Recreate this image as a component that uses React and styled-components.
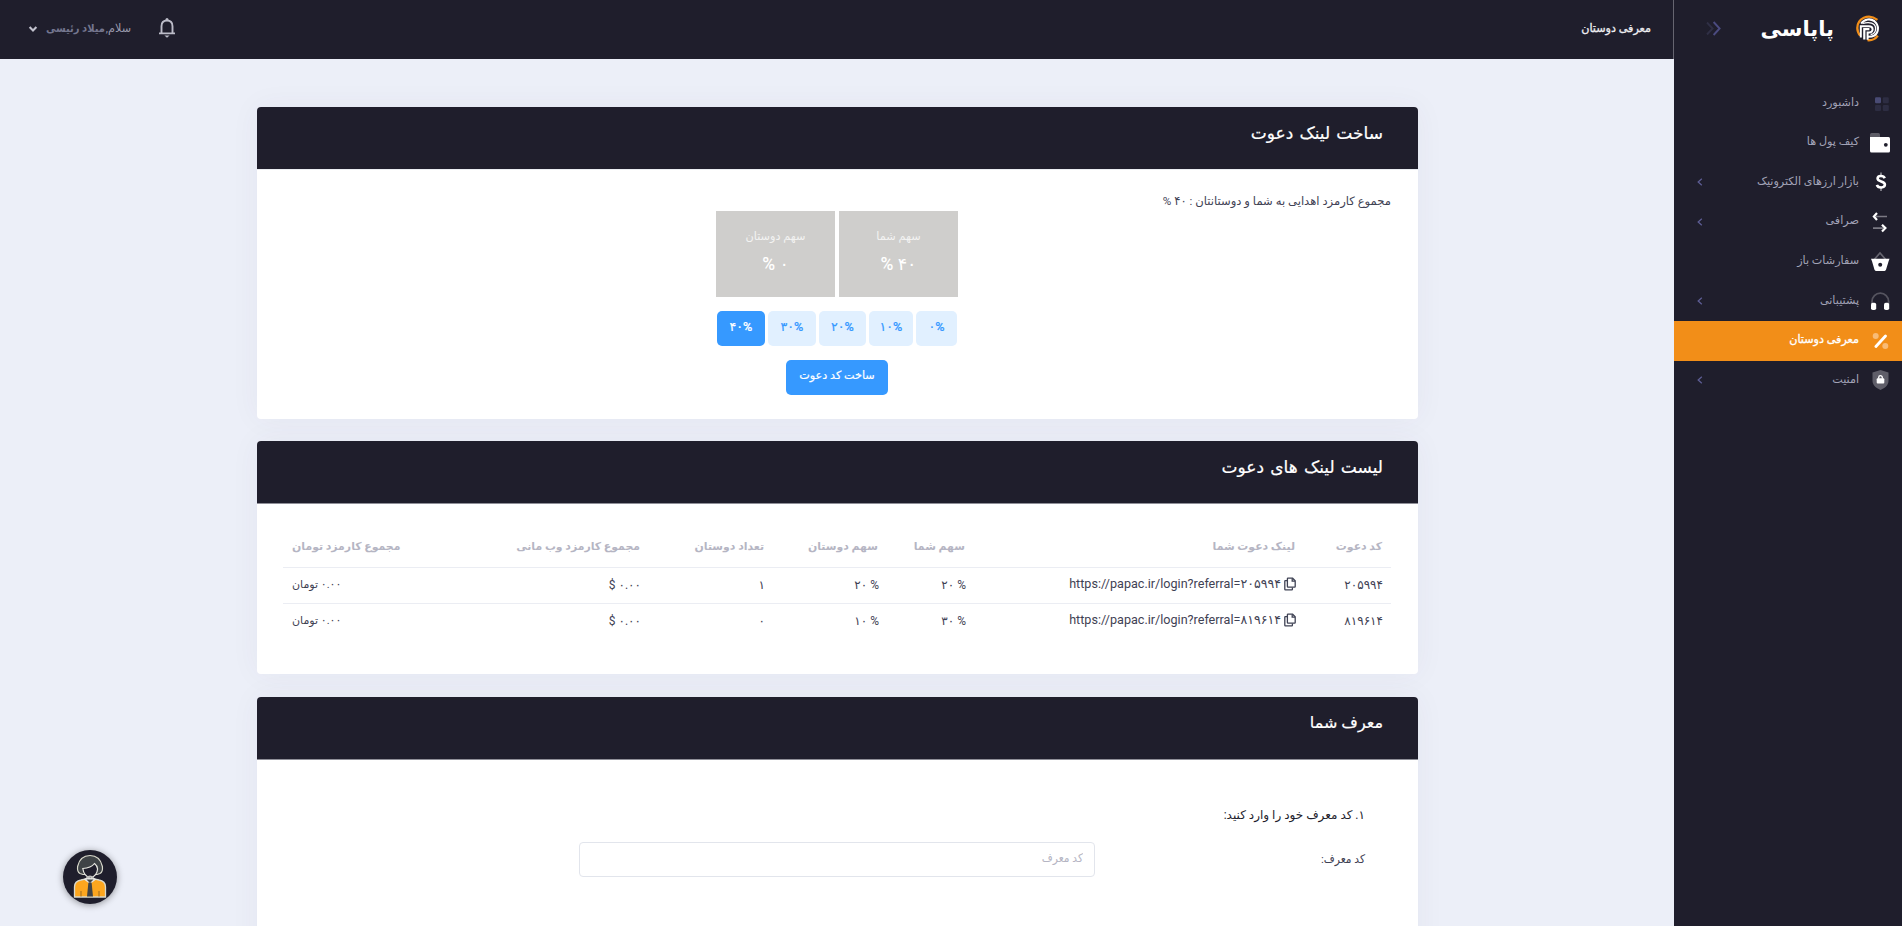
import React from "react";
import styled, { createGlobalStyle, css } from "styled-components";

const ink = "#1f1e2c";
const accent = "#f28e18";
const blue = "#3699ff";
const narrow = `Roboto, "DejaVu Sans Condensed", "DejaVu Sans", sans-serif`;

const Global = createGlobalStyle`
  *, *::before, *::after { box-sizing: border-box; }
  body {
    margin: 0;
    overflow: hidden;
    background: #eceff8;
    font-family: Roboto, "DejaVu Sans", sans-serif;
    font-size: 12px;
    color: #3f4254;
  }
`;

const Page = styled.div`
  direction: rtl;
  display: grid;
  grid-template-columns: 228px minmax(0, 1fr);
  height: 926px;
  overflow: hidden;
`;

/* ---------- sidebar ---------- */
const Sidebar = styled.aside`
  background: ${ink};
  display: flex;
  flex-direction: column;
`;

const Brand = styled.div`
  height: 59px;
  display: flex;
  align-items: center;
  padding: 0 22px 2px 32px;
`;

const BrandName = styled.span`
  margin-right: 22px;
  font-size: 21px;
  font-weight: 700;
  line-height: 30px;
  color: #fff;
  white-space: nowrap;
`;

const BrandToggle = styled.span`
  display: flex;
  margin-right: auto;
`;

const Menu = styled.ul`
  list-style: none;
  margin: 24.4px 0 0;
  padding: 0;
`;

const MenuItem = styled.li`
  height: 39.6px;
  display: flex;
  align-items: center;
  padding: 0 9px 0 22px;
  background: ${(p) => (p.$active ? accent : "transparent")};
  color: ${(p) => (p.$active ? "#fff" : "#a2a3b7")};
  -webkit-text-stroke: ${(p) => (p.$active ? "0.3px #fff" : "0")};
`;

const MenuIcon = styled.span`
  width: 24px;
  display: flex;
  justify-content: center;
`;

const MenuLabel = styled.span`
  margin-right: 10px;
  font-size: 11.2px;
  line-height: 20px;
  padding-bottom: 1px;
  white-space: nowrap;
`;

const MenuArrow = styled.span`
  margin-right: auto;
  display: flex;
`;

/* ---------- top bar ---------- */
const Main = styled.div`
  display: flex;
  flex-direction: column;
  min-width: 0;
`;

const Topbar = styled.header`
  height: 59px;
  flex: none;
  background: ${ink};
  border-right: 1px solid #666570;
  display: flex;
  align-items: center;
  padding: 0 22px 2px 28px;
`;

const TopTitle = styled.h1`
  margin: 0;
  font-size: 11.2px;
  font-weight: 500;
  line-height: 20px;
  color: #eeeef2;
  -webkit-text-stroke: 0.3px #eeeef2;
`;

const Bell = styled.span`
  margin-right: auto;
  display: flex;
`;

const User = styled.div`
  margin-right: 27px;
  display: flex;
  align-items: center;
  gap: 1px;
  font-size: 11.2px;
  line-height: 20px;
  color: #9899ac;
`;

const UserName = styled.span`
  font-family: ${narrow};
  font-stretch: condensed;
  font-size: 11px;
  color: #74768f;
  font-weight: 700;
`;

const Caret = styled.span`
  display: flex;
  margin-right: 7px;
`;

/* ---------- cards ---------- */
const Content = styled.main`
  padding: 48px 256px 0 257px;
  display: flex;
  flex-direction: column;
  gap: 22.4px;
`;

const Card = styled.section`
  flex: none;
  height: ${(p) => p.$height}px;
  background: #fff;
  border-radius: 4px;
  box-shadow: 0 0 30px rgba(82, 63, 105, 0.05);
`;

const CardHead = styled.div`
  height: 63px;
  background: ${ink};
  border-bottom: 1px solid ${(p) => p.$line || "#8f8f98"};
  border-radius: 4px 4px 0 0;
  padding: 11px 35px 0;
`;

const CardTitle = styled.h3`
  margin: 0;
  font-size: ${(p) => p.$size || 17}px;
  word-spacing: ${(p) => p.$space || 0}px;
  font-weight: 500;
  line-height: 30px;
  color: #fff;
  -webkit-text-stroke: 0.2px #fff;
`;

const LinkBody = styled.div`
  display: flex;
  flex-direction: column;
  align-items: center;
  padding: 21px 27px 0 26px;
`;

const Total = styled.p`
  align-self: stretch;
  margin: 0;
  line-height: 20px;
  font-size: 11.6px;
`;

const Shares = styled.div`
  display: flex;
  gap: 4px;
`;

const Share = styled.div`
  width: 119px;
  height: 86px;
  background: #cfcecc;
  color: #fff;
  text-align: center;
  padding-top: 16px;
`;

const ShareLabel = styled.div`
  font-size: 11.3px;
  line-height: 20px;
  color: #f3f3f2;
`;

const ShareValue = styled.div`
  font-size: 17.5px;
  font-weight: 500;
  line-height: 24px;
  margin-top: 5px;
`;

const Options = styled.div`
  display: flex;
  gap: 3px;
  margin-top: 14px;
`;

const solid = css`
  background: ${blue};
  color: #fff;
`;
const light = css`
  background: #e1f0ff;
  color: ${blue};
`;

const Button = styled.button`
  border: 0;
  border-radius: 5px;
  height: 35px;
  width: ${(p) => p.$width}px;
  padding: 0 0 3px;
  font: inherit;
  font-size: 12.6px;
  font-weight: 500;
  line-height: 20px;
  white-space: nowrap;
  -webkit-text-stroke: 0.2px currentColor;
  ${(p) => (p.$solid ? solid : light)}
`;

const Submit = styled(Button)`
  margin-top: 14px;
  font-size: 11.2px;
`;

/* ---------- table ---------- */
const TableWrap = styled.div`
  padding: 25px 27px 0 26px;
`;

const Table = styled.table`
  width: 100%;
  table-layout: fixed;
  border-collapse: collapse;
`;

const Col = styled.col`
  width: ${(p) => p.$width}px;
`;

const Th = styled.th`
  height: 38px;
  padding: 0 9px 2px;
  text-align: ${(p) => p.$align || "right"};
  font-size: 10.9px;
  font-weight: 700;
  line-height: 20px;
  color: #b5b5c3;
  white-space: nowrap;
`;

const Td = styled.td`
  height: 36px;
  padding: 0 8px 1px 9px;
  border-top: 1px solid #ebedf3;
  text-align: ${(p) => p.$align || "right"};
  font-size: ${(p) => p.$size || 12}px;
  line-height: 20px;
  white-space: nowrap;
`;

const Ltr = styled.span`
  direction: ltr;
  unicode-bidi: isolate;
`;

const Referral = styled.span`
  display: inline-flex;
  align-items: center;
  gap: 3px;
`;

const Url = styled(Ltr)`
  font-size: 12.6px;
  padding-top: 1px;
`;

/* ---------- form ---------- */
const Form = styled.form`
  padding: 45px 53px 0;
`;

const Step = styled.div`
  font-size: 12px;
  line-height: 20px;
  color: #1e1e2d;
`;

const Field = styled.label`
  display: grid;
  grid-template-columns: 270px 516px;
  align-items: center;
  margin-top: 17px;
  font-family: ${narrow};
  font-size: 11.8px;
  line-height: 20px;
`;

const Input = styled.input`
  height: 35px;
  border: 1px solid #e2e5ec;
  border-radius: 4px;
  padding: 0 11px 2px;
  font: inherit;
  outline: 0;
  &::placeholder { color: #b5b5c3; opacity: 1; }
`;

const Support = styled.button`
  position: fixed;
  left: 63px;
  top: 850px;
  width: 54px;
  height: 54px;
  padding: 0;
  border: 0;
  border-radius: 50%;
  background: ${ink};
  box-shadow: 0 1px 7px rgba(0, 0, 0, 0.4);
  display: flex;
  align-items: center;
  justify-content: center;
`;

/* ---------- drawings ---------- */
const Logo = () => (
  <svg width="24" height="27" viewBox="0 0 24 27" fill="none">
    <path d="M4.2 20.6A11.4 11.4 0 0 1 1.3 13C1.3 4 12 -2.5 21.4 4.8" stroke={accent} strokeWidth="2.3" />
    <path d="M11.5 25.2C16 25.6 19.4 24 21.8 20.6" stroke={accent} strokeWidth="2.3" />
    <path d="M5.2 8.6C8.6 3.8 14.4 3.2 18.4 6.2C23.4 10.2 22.8 17.8 18.2 20.6C16.6 21.6 14.6 21.8 12 21.8" stroke="#fff" strokeWidth="2.1" />
    <path d="M4.8 22.6V11.2H13C17.8 11.2 17.8 17.4 13.2 17.4H11.6V24.8" stroke="#fff" strokeWidth="2" />
    <path d="M8.3 24.6V14.2H13.4" stroke="#fff" strokeWidth="2.2" />
    <path d="M7 8.3C13 6.6 19.6 7.6 19.6 13.4C19.6 17 17.4 19.2 14.6 19.5" stroke="#fff" strokeWidth="1.3" />
  </svg>
);

const ToggleIcon = () => (
  <svg width="15" height="15" viewBox="0 0 15 15" fill="none" strokeWidth="1.9">
    <path d="M1 1.5L6.6 7.5L1 13.5" stroke="#2f2f45" />
    <path d="M7.6 1L13.6 7.5L7.6 14" stroke="#4b4b80" />
  </svg>
);

const ArrowIcon = () => (
  <svg width="8" height="8" viewBox="0 0 8 8" fill="none">
    <path d="M5.8 0.8L2.2 4L5.8 7.2" stroke="#5d5d94" strokeWidth="1.3" />
  </svg>
);

const DashboardIcon = () => (
  <svg width="24" height="20" viewBox="0 0 24 20">
    <rect x="6" y="4.2" width="6" height="6" rx="1.2" fill="#494b74" />
    <rect x="13.8" y="4.2" width="6" height="6" rx="1.2" fill="#2d2d42" />
    <rect x="6" y="12" width="6" height="6" rx="1.2" fill="#2d2d42" />
    <rect x="13.8" y="12" width="6" height="6" rx="1.2" fill="#2d2d42" />
  </svg>
);

const WalletIcon = () => (
  <svg width="24" height="22" viewBox="-1 0 24 22">
    <rect x="0" y="1" width="10" height="8" rx="1.5" fill="#5d5c66" />
    <path d="M0 5H18.5a1.5 1.5 0 0 1 1.5 1.5V19a1.5 1.5 0 0 1-1.5 1.5H1.5A1.5 1.5 0 0 1 0 19Z" fill="#fff" />
    <circle cx="15.8" cy="12.8" r="1.9" fill={ink} />
  </svg>
);

const DollarIcon = () => (
  <svg width="24" height="22" viewBox="-1 0 24 22" fill="none">
    <path d="M11 1.5V4M11 17V20" stroke="#777680" strokeWidth="2" />
    <path d="M14.7 7.2C13.6 4.2 7.6 4.2 7.6 7.6C7.6 11.2 14.9 9.8 14.9 13.6C14.9 17.3 8 17.5 6.9 13.9" stroke="#fff" strokeWidth="2.6" />
  </svg>
);

const SwapIcon = () => (
  <svg width="24" height="24" viewBox="0 0.5 24 24" fill="none">
    <path d="M7 7H18M4 18.6H14" stroke="#7b7a84" strokeWidth="1.6" />
    <path d="M8 3.6L4.9 7L8 10.4M13 15.2L16.4 18.6L13 22" stroke="#fff" strokeWidth="2.2" />
  </svg>
);

const BasketIcon = () => (
  <svg width="24" height="22" viewBox="0 0.8 24 22">
    <path d="M5.5 9L11 2.8L16.5 9" fill="none" stroke="#66656f" strokeWidth="1.7" />
    <path d="M2 8.6H20.5L19.6 11L17 19.6Q16.6 20.7 15.6 20.7H6.9Q5.9 20.7 5.5 19.6L3 11Z" fill="#fff" />
    <circle cx="11.2" cy="14.6" r="2" fill={ink} />
  </svg>
);

const HeadphoneIcon = () => (
  <svg width="24" height="22" viewBox="0 0 24 22">
    <path d="M3 14V11.4a8.3 8.3 0 0 1 16.6 0V14" fill="none" stroke="#55545f" strokeWidth="1.8" />
    <rect x="2" y="12.8" width="5.2" height="7.2" rx="1.8" fill="#fff" />
    <rect x="15" y="12.8" width="5.2" height="7.2" rx="1.8" fill="#fff" />
  </svg>
);

const PercentIcon = () => (
  <svg width="24" height="22" viewBox="-0.5 0.2 24 22">
    <circle cx="6.2" cy="6.3" r="3" fill="#f8bb76" />
    <circle cx="15.8" cy="16.3" r="3" fill="#f8bb76" />
    <path d="M16 6.2L6.4 16.6" stroke="#fff" strokeWidth="2.9" strokeLinecap="round" />
  </svg>
);

const ShieldIcon = () => (
  <svg width="24" height="24" viewBox="-0.5 -0.4 24 24">
    <path d="M11 1.5L19 4V12.5C19 17 14.5 20 11 21.5C7.5 20 3 17 3 12.5V4Z" fill="#5f5e69" />
    <rect x="7.2" y="9.8" width="7.6" height="5.4" rx="1" fill="#fff" />
    <path d="M9.2 10.4V9.1a1.8 1.8 0 0 1 3.6 0V10.4" fill="none" stroke="#fff" strokeWidth="1.3" />
  </svg>
);

const BellIcon = () => (
  <svg width="18" height="21" viewBox="0 0.5 18 21" fill="none">
    <path d="M1 15.9H17M3.5 15.5V8.8C3.5 5 5.7 3 9 3S14.5 5 14.5 8.8V15.5" stroke="#bcbcc8" strokeWidth="1.9" />
    <circle cx="9" cy="2" r="1.5" fill="#bcbcc8" />
    <path d="M6.4 18H11.6L9 20.3Z" fill="#bcbcc8" />
  </svg>
);

const CaretIcon = () => (
  <svg width="10" height="8" viewBox="0 0 10 8" fill="none">
    <path d="M1.6 2L5 5.4L8.4 2" stroke="#c3c3cf" strokeWidth="2.1" />
  </svg>
);

const CopyIcon = () => (
  <svg width="12" height="14" viewBox="0 0 12 14" fill="none" stroke="#3f4254" strokeWidth="1.3">
    <path d="M4 1.2H8.6L11.2 3.8V9.6Q11.2 10.2 10.6 10.2H4Q3.4 10.2 3.4 9.6V1.8Q3.4 1.2 4 1.2Z" />
    <path d="M8.2 1.4V4.2H11M3.4 3.6H1.4Q.8 3.6 .8 4.2V12.2Q.8 12.8 1.4 12.8H7.8Q8.4 12.8 8.4 12.2V10.4" />
  </svg>
);

const AgentIcon = () => (
  <svg width="34" height="46" viewBox="0 0 34 46">
    <path d="M1.5 43V33Q1.5 27 8 26L13 24.8H21L26 26Q32.5 27 32.5 33V43Z" fill="#fca61f" stroke="#d9d9cc" strokeWidth="1.3" />
    <path d="M10.5 25.3L17 30L23.5 25.3L21 24H13Z" fill="#e6e6e3" />
    <path d="M13.5 25.4L17 29L20.5 25.4Z" fill="#3f4347" />
    <path d="M15.4 28.5H18.6L20 42.4H14Z" fill="#3f4347" />
    <path d="M8 37V42.5M26 37V42.5" stroke="#9b6a20" strokeWidth="1" />
    <path d="M7 19.5Q4 18 4.6 12.5Q7 1.5 17 1.5Q27 1.5 29.4 12.5Q30 18 27 19.5L24 20.5H10Z" fill="#3f4347" stroke="#d9d9cc" strokeWidth="1.2" />
    <path d="M9.8 14.5Q18 14 21.5 9.5Q24.6 12 24.6 15Q24 22 17.3 24.2Q10.8 22 9.8 14.5Z" fill={ink} stroke="#e6e6e0" strokeWidth="1.2" />
    <path d="M13.5 23.8Q17 20.8 20.5 23.8" fill="none" stroke="#bfc0bd" strokeWidth="1.6" />
  </svg>
);

const menu = [
  { label: "داشبورد", icon: DashboardIcon },
  { label: "کیف پول ها", icon: WalletIcon },
  { label: "بازار ارزهای الکترونیک", icon: DollarIcon, sub: true },
  { label: "صرافی", icon: SwapIcon, sub: true },
  { label: "سفارشات باز", icon: BasketIcon },
  { label: "پشتیبانی", icon: HeadphoneIcon, sub: true },
  { label: "معرفی دوستان", icon: PercentIcon, active: true },
  { label: "امنیت", icon: ShieldIcon, sub: true },
];

const options = [
  { label: "۰%", width: 41 },
  { label: "۱۰%", width: 44 },
  { label: "۲۰%", width: 47 },
  { label: "۳۰%", width: 48 },
  { label: "۴۰%", width: 48, selected: true },
];

const columns = [
  { label: "کد دعوت", width: 87 },
  { label: "لینک دعوت شما", width: 330 },
  { label: "سهم شما", width: 87 },
  { label: "سهم دوستان", width: 114 },
  { label: "تعداد دوستان", width: 124 },
  { label: "مجموع کارمزد وب مانی", width: 190 },
  { label: "مجموع کارمزد تومان", width: 176, align: "left" },
];

const links = [
  { code: "۲۰۵۹۹۴", mine: "۲۰ %", friends: "۲۰ %", count: "۱" },
  { code: "۸۱۹۶۱۴", mine: "۳۰ %", friends: "۱۰ %", count: "۰" },
];

export default function App() {
  return (
    <Page>
      <Global />
      <Sidebar>
        <Brand>
          <Logo />
          <BrandName>پاپاسی</BrandName>
          <BrandToggle><ToggleIcon /></BrandToggle>
        </Brand>
        <Menu>
          {menu.map(({ label, icon: Icon, sub, active }) => (
            <MenuItem key={label} $active={active}>
              <MenuIcon><Icon /></MenuIcon>
              <MenuLabel>{label}</MenuLabel>
              {sub && <MenuArrow><ArrowIcon /></MenuArrow>}
            </MenuItem>
          ))}
        </Menu>
      </Sidebar>

      <Main>
        <Topbar>
          <TopTitle>معرفی دوستان</TopTitle>
          <Bell><BellIcon /></Bell>
          <User>
            <span>سلام,</span>
            <UserName>میلاد رئیسی</UserName>
            <Caret><CaretIcon /></Caret>
          </User>
        </Topbar>

        <Content>
          <Card $height={312}>
            <CardHead $line="#ebedf2"><CardTitle $space={2}>ساخت لینک دعوت</CardTitle></CardHead>
            <LinkBody>
              <Total>مجموع کارمزد اهدایی به شما و دوستانتان : ۴۰ %</Total>
              <Shares>
                <Share>
                  <ShareLabel>سهم شما</ShareLabel>
                  <ShareValue>۴۰ %</ShareValue>
                </Share>
                <Share>
                  <ShareLabel>سهم دوستان</ShareLabel>
                  <ShareValue>۰ %</ShareValue>
                </Share>
              </Shares>
              <Options>
                {options.map((o) => (
                  <Button key={o.label} type="button" $width={o.width} $solid={o.selected}>{o.label}</Button>
                ))}
              </Options>
              <Submit type="button" $width={102} $solid>ساخت کد دعوت</Submit>
            </LinkBody>
          </Card>

          <Card $height={233}>
            <CardHead><CardTitle $space={2}>لیست لینک های دعوت</CardTitle></CardHead>
            <TableWrap>
              <Table>
                <colgroup>
                  {columns.map((c) => <Col key={c.label} $width={c.width} />)}
                </colgroup>
                <thead>
                  <tr>{columns.map((c) => <Th key={c.label} $align={c.align}>{c.label}</Th>)}</tr>
                </thead>
                <tbody>
                  {links.map((l) => (
                    <tr key={l.code}>
                      <Td>{l.code}</Td>
                      <Td>
                        <Referral>
                          <CopyIcon />
                          <Url>{`https://papac.ir/login?referral=${l.code}`}</Url>
                        </Referral>
                      </Td>
                      <Td><Ltr>{l.mine}</Ltr></Td>
                      <Td><Ltr>{l.friends}</Ltr></Td>
                      <Td>{l.count}</Td>
                      <Td>۰.۰۰ $</Td>
                      <Td $align="left" $size={11}>۰.۰۰ تومان</Td>
                    </tr>
                  ))}
                </tbody>
              </Table>
            </TableWrap>
          </Card>

          <Card $height={320}>
            <CardHead><CardTitle $size={16}>معرف شما</CardTitle></CardHead>
            <Form>
              <Step>۱. کد معرف خود را وارد کنید:</Step>
              <Field>
                <span>کد معرف:</span>
                <Input placeholder="کد معرف" />
              </Field>
            </Form>
          </Card>
        </Content>
      </Main>

      <Support type="button"><AgentIcon /></Support>
    </Page>
  );
}
